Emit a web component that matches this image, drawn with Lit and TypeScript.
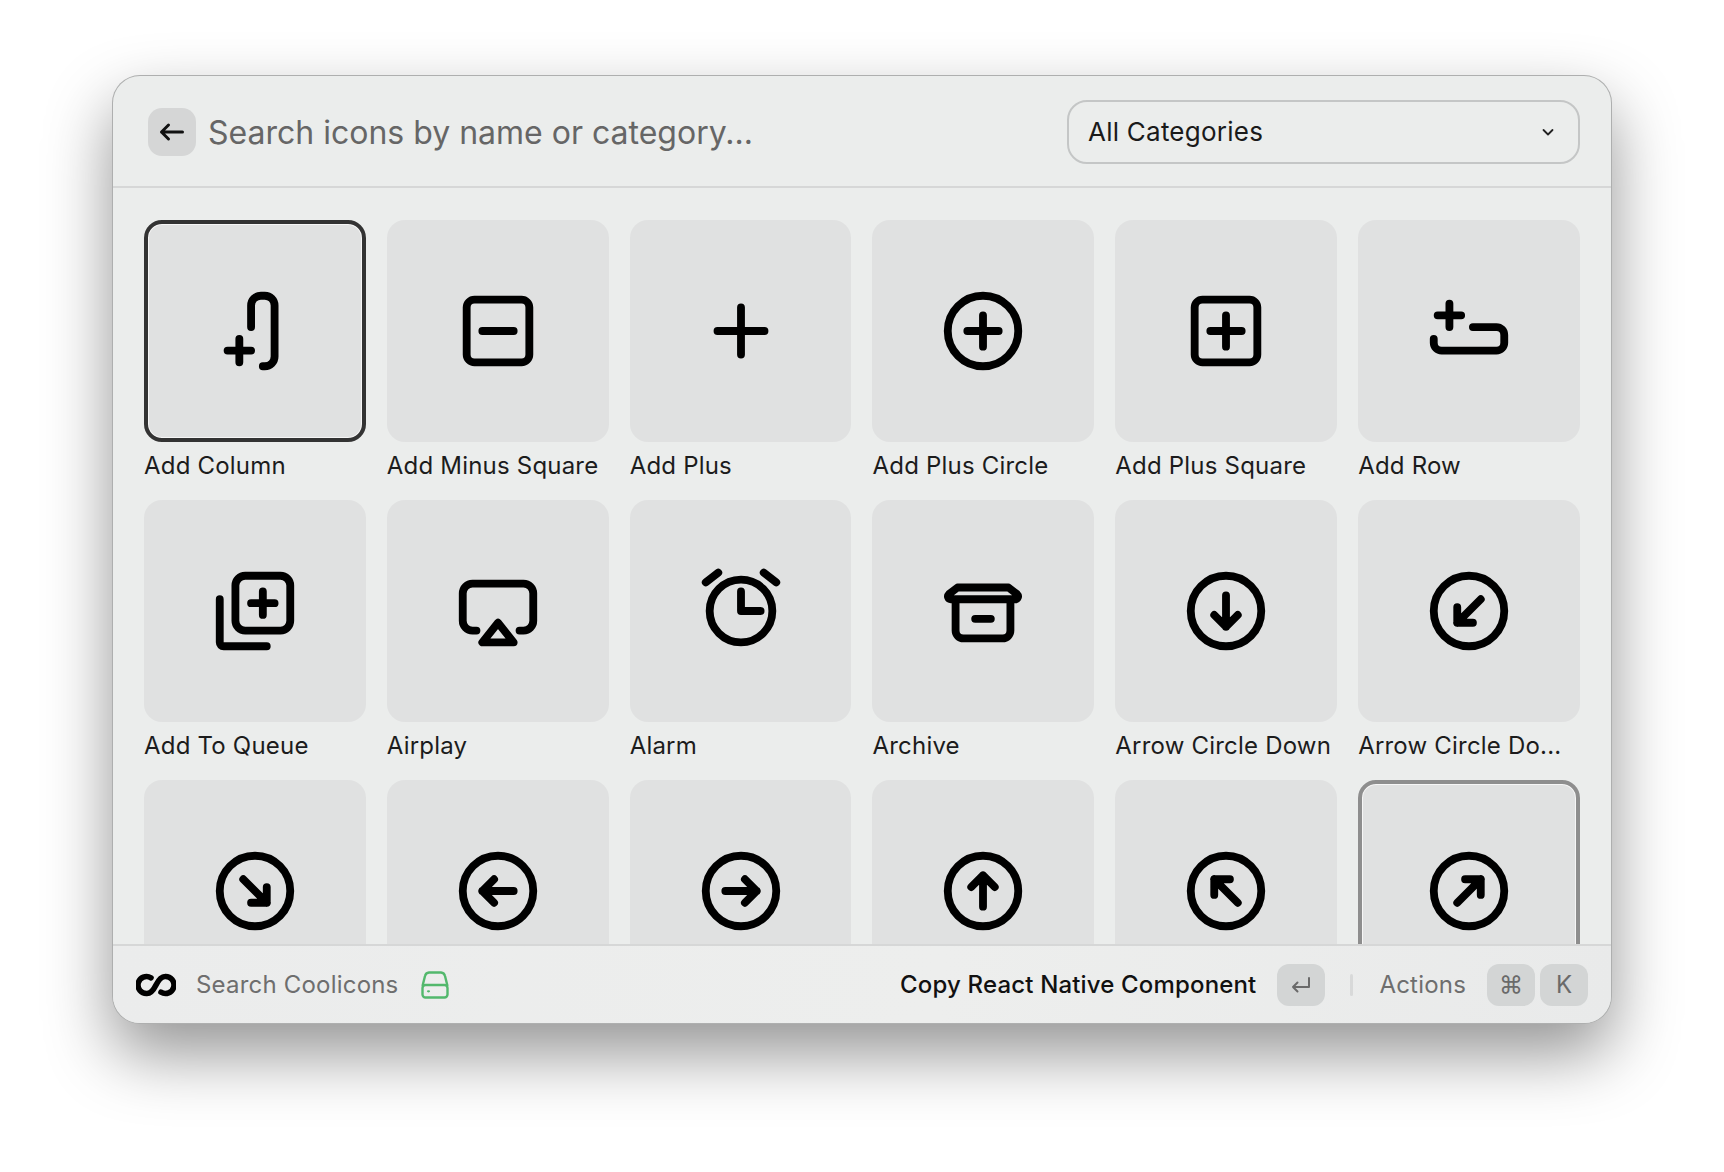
import { LitElement, html, css, svg, nothing } from "lit";
import { customElement } from "lit/decorators.js";

const sq = svg`<rect x="4" y="4" width="16" height="16" rx="2"/>`;
const circ = svg`<circle cx="12" cy="12" r="9"/>`;

interface Item { name?: string; icon: unknown; mark?: "active" | "hover" }

const items: Item[] = [
  { name: "Add Column", mark: "active", icon: svg`<path d="M5 17h6M8 14v6M11 11V5.5C11 4.1 12.1 3 13.5 3h1C15.9 3 17 4.1 17 5.500V18.500C17 19.900 15.900 21 14.500 21H14"/>` },
  { name: "Add Minus Square", icon: svg`${sq}<path d="M8 12h8"/>` },
  { name: "Add Plus", icon: svg`<path d="M6 12h12M12 6v12"/>` },
  { name: "Add Plus Circle", icon: svg`${circ}<path d="M8 12h8M12 8v8"/>` },
  { name: "Add Plus Square", icon: svg`${sq}<path d="M8 12h8M12 8v8"/>` },
  { name: "Add Row", icon: svg`<path d="M4 8h6M7 5v6M3 14v1c0 1.100.9 2 2 2h14c1.100 0 2-.9 2-2v-2c0-1.100-.9-2-2-2h-6"/>` },
  { name: "Add To Queue", icon: svg`<rect x="7" y="3" width="14" height="14" rx="2.500"/><path d="M11 10h6M14 7v6M3 9v11c0 .6.4 1 1 1h11"/>` },
  { name: "Airplay", icon: svg`<path d="M6.500 17H5.500C4.100 17 3 15.900 3 14.500v-7C3 6.100 4.100 5 5.500 5h13C19.900 5 21 6.100 21 7.500v7c0 1.400-1.100 2.500-2.500 2.500h-1"/><path d="M12 15l-4 5h8z"/>` },
  { name: "Alarm", icon: svg`<circle cx="12" cy="12" r="8"/><path d="M12 7v5h5M3 4.700 6.200 2.200M21 4.700 17.800 2.200"/>` },
  { name: "Archive", icon: svg`<path d="M5.500 6h13l2.200 1.700c.5.5.2 1.300-.5 1.300H3.800c-.7 0-1-.8-.5-1.300zM5 9v8c0 1.100.9 2 2 2h10c1.100 0 2-.9 2-2V9M10 14h4"/>` },
  { name: "Arrow Circle Down", icon: svg`${circ}<path d="M12 8v8M9 13l3 3 3-3"/>` },
  { name: "Arrow Circle Do...", icon: svg`${circ}<path d="M15 9l-6 6M9 11v4h4"/>` },
  { icon: svg`${circ}<path d="M9 9l6 6M15 11v4h-4"/>` },
  { icon: svg`${circ}<path d="M16 12H8M11 9l-3 3 3 3"/>` },
  { icon: svg`${circ}<path d="M8 12h8M13 9l3 3-3 3"/>` },
  { icon: svg`${circ}<path d="M12 16V8M9 11l3-3 3 3"/>` },
  { icon: svg`${circ}<path d="M15 15 9 9M9 13V9h4"/>` },
  { mark: "hover", icon: svg`${circ}<path d="M9 15l6-6M11 9h4v4"/>` },
];

@customElement("app-root")
export class AppRoot extends LitElement {
  static styles = css`
    :host {
      display: block;
      height: 1172px;
      box-sizing: border-box;
      padding: 75px 112px 0;
      background: #fff;
      font-family: Inter, "Liberation Sans", sans-serif;
      overflow: hidden;
    }
    .window {
      box-sizing: border-box;
      height: 949px;
      display: flex;
      flex-direction: column;
      border: 1px solid rgba(0, 0, 0, 0.26);
      border-radius: 28px;
      background: #ebedec;
      overflow: hidden;
      box-shadow: 0 30px 66px rgba(0, 0, 0, 0.42);
    }
    .header {
      flex: none;
      box-sizing: border-box;
      height: 112px;
      display: flex;
      align-items: center;
      padding: 2px 31px 0 35px;
      border-bottom: 2px solid #d6d7d7;
    }
    .back {
      flex: none;
      width: 48px;
      height: 48px;
      border-radius: 14px;
      background: #d5d6d6;
    }
    .back svg { display: block; }
    .search {
      flex: 1;
      margin-left: 12px;
      font-size: 32px;
      color: #666;
    }
    .select {
      flex: none;
      box-sizing: border-box;
      width: 513px;
      height: 64px;
      margin-top: -1px;
      display: flex;
      align-items: center;
      justify-content: space-between;
      padding: 0 23px 0 19px;
      border: 2px solid #c4c6c6;
      border-radius: 20px;
      font-size: 26px;
      letter-spacing: 0.24px;
      color: #1a1a1a;
    }
    .grid {
      flex: 1;
      min-height: 0;
      overflow: hidden;
      box-sizing: border-box;
      padding: 32px 31px 0;
      display: grid;
      grid-template-columns: repeat(6, minmax(0, 1fr));
      grid-auto-rows: max-content;
      column-gap: 21px;
      row-gap: 16px;
    }
    .card {
      box-sizing: border-box;
      aspect-ratio: 1;
      display: flex;
      align-items: center;
      justify-content: center;
      border-radius: 18px;
      background: #e0e1e1;
    }
    .card.active {
      border: 4px solid #333;
      box-shadow: inset 0 0 0 1px #f6f6f6;
    }
    .card.hover {
      border: 4px solid #8e8e8e;
      box-shadow: inset 0 0 0 1px #f6f6f6;
    }
    .card svg {
      width: 94px;
      height: 94px;
      fill: none;
      stroke: #000;
      stroke-width: 2;
      stroke-linecap: round;
      stroke-linejoin: round;
    }
    .label {
      margin-top: 6px;
      height: 36px;
      line-height: 36px;
      font-size: 24px;
      letter-spacing: 0.2px;
      color: #1c1c1c;
      white-space: nowrap;
      overflow: hidden;
    }
    .footer {
      flex: none;
      box-sizing: border-box;
      height: 79px;
      display: flex;
      align-items: center;
      padding: 0 23px 0 23px;
      border-top: 2px solid #d6d7d7;
      background: linear-gradient(100deg, #ebecec, #edeeed 55%, #e9eaea);
    }
    .logo { flex: none; display: block; }
    .muted { color: #6e6e6e; font-size: 24px; letter-spacing: 0.2px; }
    .title { margin-left: 20px; }
    .drive { flex: none; display: block; margin-left: 23px; }
    .spacer { flex: 1; }
    .action { font-size: 24px; font-weight: 500; letter-spacing: 0.16px; color: #111; }
    .key {
      flex: none;
      box-sizing: border-box;
      width: 48px;
      height: 42px;
      display: flex;
      align-items: center;
      justify-content: center;
      border-radius: 12px;
      background: #d3d5d5;
      color: #6a6a6a;
      font-size: 24px;
    }
    .key.enter { margin-left: 21px; }
    .sep {
      flex: none;
      width: 3px;
      height: 22px;
      margin: 0 26px 0 25px;
      border-radius: 2px;
      background: #d8d9d9;
    }
    .keys { display: flex; gap: 5px; margin-left: 21px; }
  `;

  render() {
    return html`
      <div class="window">
        <div class="header">
          <div class="back">
            <svg width="48" height="48" viewBox="0 0 48 48" fill="none" stroke="#111" stroke-width="3" stroke-linecap="round" stroke-linejoin="round">
              <path d="M13.500 24H34.500M20.500 17l-7 7 7 7"/>
            </svg>
          </div>
          <div class="search">Search icons by name or category...</div>
          <div class="select">
            <span>All Categories</span>
            <svg width="14" height="10" viewBox="0 0 14 10" fill="none" stroke="#222" stroke-width="1.800" stroke-linecap="round" stroke-linejoin="round">
              <path d="M2.500 3 7 7.500 11.500 3"/>
            </svg>
          </div>
        </div>
        <div class="grid">
          ${items.map(
            (it) => html`
              <div>
                <div class="card ${it.mark ?? ""}">
                  <svg viewBox="0 0 24 24">${it.icon}</svg>
                </div>
                ${it.name ? html`<div class="label">${it.name}</div>` : nothing}
              </div>
            `
          )}
        </div>
        <div class="footer">
          <svg class="logo" width="40" height="24" viewBox="0 0 40 24" fill="none" stroke="#000" stroke-width="5.600" stroke-linecap="round">
            <path d="M15 4.800A8.500 8.500 0 1 0 11 20.500C15 20.500 17.500 17 20 12C22.500 7 25 3.500 29 3.500A8.500 8.500 0 1 1 25 19.200"/>
          </svg>
          <span class="muted title">Search Coolicons</span>
          <svg class="drive" width="28" height="28" viewBox="0 0 28 28" fill="none" stroke="#52b86c" stroke-width="2.400" stroke-linejoin="round">
            <path d="M1.500 15 4 5a4.500 4.500 0 0 1 4-3.500h12A4.500 4.500 0 0 1 24 5l2.500 10"/>
            <rect x="1.500" y="14" width="25" height="12.500" rx="3"/>
            <ellipse cx="7.500" cy="20.300" rx="1.600" ry="1.100" fill="#52b86c" stroke="none"/>
          </svg>
          <div class="spacer"></div>
          <span class="action">Copy React Native Component</span>
          <div class="key enter">
            <svg width="22" height="18" viewBox="0 0 22 18" fill="none" stroke="#6a6a6a" stroke-width="2" stroke-linecap="round" stroke-linejoin="round">
              <path d="M19 2v9H3M7.500 6.500 3 11l4.500 4.500"/>
            </svg>
          </div>
          <div class="sep"></div>
          <span class="muted">Actions</span>
          <div class="keys">
            <div class="key">⌘</div>
            <div class="key">K</div>
          </div>
        </div>
      </div>
    `;
  }
}
